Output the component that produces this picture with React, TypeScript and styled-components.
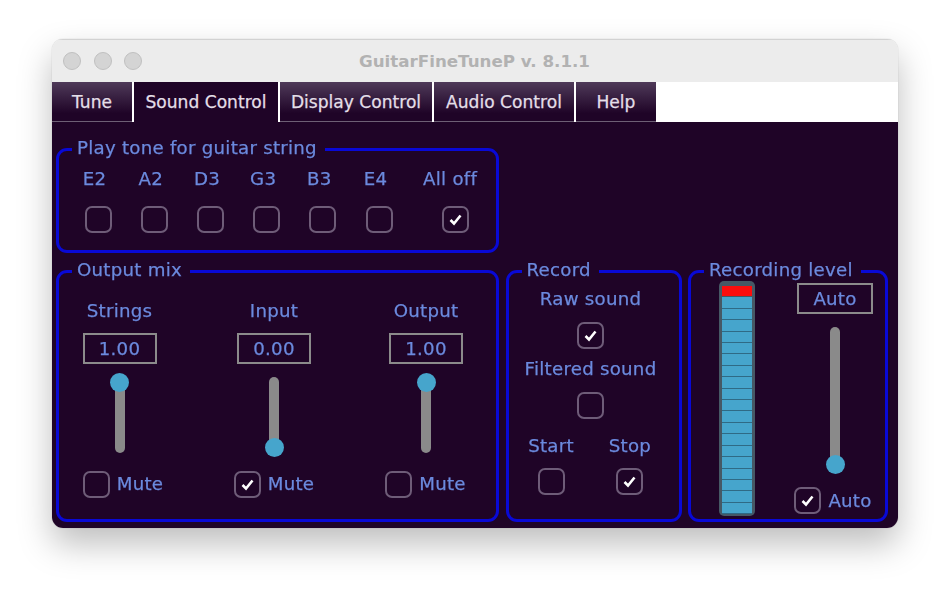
import styled, { createGlobalStyle } from "styled-components";

const Global = createGlobalStyle`
  html, body {
    margin: 0;
    background: #fff;
  }
  body {
    font-family: "DejaVu Sans", "Liberation Sans", sans-serif;
  }
`;

const Page = styled.div`
  width: 950px;
  height: 594px;
  padding: 39px 52px 0;
  box-sizing: border-box;
  overflow: hidden;
`;

const Window = styled.div`
  width: 846px;
  height: 489px;
  border-radius: 11px;
  overflow: hidden;
  display: flex;
  flex-direction: column;
  filter: blur(0.35px);
  box-shadow: 0 0 1px rgba(0, 0, 0, 0.35), 0 16px 34px rgba(0, 0, 0, 0.26);
`;

const TitleBar = styled.div`
  height: 43px;
  flex: none;
  display: flex;
  align-items: center;
  position: relative;
  padding-left: 11px;
  gap: 12.5px;
  background: #ececec;
  box-sizing: border-box;
  border-top: 1px solid #d2d2d2;
`;

const Light = styled.span`
  width: 18px;
  height: 18px;
  box-sizing: border-box;
  border-radius: 50%;
  background: #d4d4d4;
  border: 1px solid #c0c0c0;
`;

const Title = styled.div`
  position: absolute;
  left: -1px;
  right: 0;
  text-align: center;
  font-size: 16.7px;
  font-weight: bold;
  color: #b2b2b2;
`;

const TabBar = styled.div`
  height: 40px;
  flex: none;
  display: flex;
  background: #fff;
`;

const Tab = styled.div<{ $width: number; $active?: boolean }>`
  width: ${({ $width }) => $width}px;
  flex: none;
  margin-right: 2px;
  box-sizing: border-box;
  display: flex;
  align-items: center;
  justify-content: center;
  font-size: 17.1px;
  -webkit-text-stroke: 0.25px;
  color: #e4dfe8;
  background: ${({ $active }) =>
    $active ? "#1f0427" : "linear-gradient(#4f3a59, #1f0427 80%)"};
  border-bottom: ${({ $active }) => ($active ? "none" : "1px solid #6d5f75")};
`;

const Body = styled.div`
  flex: 1;
  background: #1f0427;
  box-sizing: border-box;
  padding: 26px 10px 6px 4px;
  display: grid;
  grid-template-columns: 443px 176px 200px;
  grid-template-rows: 105px 252px;
  column-gap: 6.5px;
  row-gap: 17px;
  color: #6b8ade;
  font-size: 18.2px;
  letter-spacing: 0.25px;
  -webkit-text-stroke: 0.25px;
`;

const Panel = styled.section`
  position: relative;
  box-sizing: border-box;
  border: 3px solid #0909d6;
  border-radius: 11px;
`;

const Legend = styled.div`
  position: absolute;
  left: 13px;
  top: -13.5px;
  padding: 0 8px 0 5px;
  line-height: 20px;
  background: #1f0427;
  white-space: nowrap;
`;

const ToneGrid = styled.div`
  display: grid;
  grid-template-columns: repeat(6, 56.2px) 97px;
  justify-items: center;
  align-items: center;
  padding: 16px 0 0 11px;
  row-gap: 14.5px;
`;

const Label = styled.div`
  line-height: 24px;
  white-space: nowrap;
`;

const ToneLabel = styled(Label)<{ $shift: number }>`
  margin-right: ${({ $shift }) => $shift}px;
`;

const Box = styled.span`
  width: 27px;
  height: 27px;
  flex: none;
  box-sizing: border-box;
  border: 2px solid #6e5c78;
  border-radius: 7px;
  display: flex;
  align-items: center;
  justify-content: center;
`;

const Checkbox = ({ checked }: { checked?: boolean }) => (
  <Box>
    {checked && (
      <svg width="15" height="13" viewBox="0 0 15 13">
        <path d="M2.5 7 L6 10.5 L12.5 2.5" fill="none" stroke="#fff" strokeWidth="2.6" />
      </svg>
    )}
  </Box>
);

const MixGrid = styled.div`
  display: grid;
  grid-template-columns: 121px 188px 116px;
  padding-top: 26px;
`;

const MixColumn = styled.div`
  display: flex;
  flex-direction: column;
  align-items: center;
`;

const Value = styled.div<{ $width: number; $height: number }>`
  width: ${({ $width }) => $width}px;
  height: ${({ $height }) => $height}px;
  flex: none;
  box-sizing: border-box;
  border: 2px solid #8b8b8b;
  display: flex;
  align-items: center;
  justify-content: center;
`;

const MixValue = styled.div`
  margin-top: 10px;
`;

const Track = styled.div<{ $height: number }>`
  position: relative;
  width: 10px;
  height: ${({ $height }) => $height}px;
  border-radius: 5px;
  background: #8a8a8a;
`;

const Thumb = styled.div`
  position: absolute;
  left: -4.5px;
  width: 19px;
  height: 19px;
  border-radius: 50%;
  background: #46a5cc;
`;

const Slider = ({ height, value }: { height: number; value: number }) => (
  <Track $height={height}>
    <Thumb style={{ top: -3.5 + (height - 11) * (1 - value) }} />
  </Track>
);

const MixSlider = styled.div`
  margin: 12.5px 0 18px;
`;

const CheckRow = styled.div<{ $shift?: number }>`
  display: flex;
  align-items: center;
  gap: 7px;
  margin-left: ${({ $shift }) => $shift ?? 0}px;
`;

const RecordStack = styled.div`
  display: grid;
  grid-template-columns: 79px 79px;
  justify-content: center;
  justify-items: center;
  padding: 14px 6px 0 0;
`;

const RecordWide = styled.div<{ $gap: number }>`
  grid-column: 1 / 3;
  display: flex;
  justify-content: center;
  margin-bottom: ${({ $gap }) => $gap}px;
`;

const RecordCell = styled.div`
  display: flex;
  flex-direction: column;
  align-items: center;
  gap: 10px;
`;

const LevelLayout = styled.div`
  display: flex;
  height: 100%;
  padding: 8px 10px 0 28px;
  box-sizing: border-box;
  justify-content: space-between;
`;

const Meter = styled.div`
  width: 36px;
  height: 235px;
  box-sizing: border-box;
  padding: 5px 3px 2px;
  border-radius: 5px;
  background: #465865;
  display: flex;
  flex-direction: column;
`;

const Segment = styled.div<{ $hot?: boolean }>`
  flex: 1;
  background: ${({ $hot }) => ($hot ? "#fb0d0d" : "#46a5cc")};
  border-bottom: 1.5px solid ${({ $hot }) => ($hot ? "#465865" : "#2f6a85")};
`;

const LevelSide = styled.div`
  width: 80px;
  padding-top: 2px;
  display: flex;
  flex-direction: column;
  align-items: center;
`;

const LevelSlider = styled.div`
  margin: 13px 0 15px;
`;

const Tabs = [
  { name: "Tune", width: 80 },
  { name: "Sound Control", width: 144, active: true },
  { name: "Display Control", width: 152 },
  { name: "Audio Control", width: 140 },
  { name: "Help", width: 80 },
];

const Mix = [
  { name: "Strings", value: "1.00", level: 1, muted: false, shift: 7 },
  { name: "Input", value: "0.00", level: 0, muted: true, shift: 0 },
  { name: "Output", value: "1.00", level: 1, muted: false, shift: -1 },
];

const Strings = ["E2", "A2", "D3", "G3", "B3", "E4"];

export default function App() {
  return (
    <Page>
      <Global />
      <Window>
        <TitleBar>
          <Light />
          <Light />
          <Light />
          <Title>GuitarFineTuneP v. 8.1.1</Title>
        </TitleBar>
        <TabBar>
          {Tabs.map((t) => (
            <Tab key={t.name} $width={t.width} $active={t.active}>
              {t.name}
            </Tab>
          ))}
        </TabBar>
        <Body>
          <Panel>
            <Legend>Play tone for guitar string</Legend>
            <ToneGrid>
              {Strings.map((s) => (
                <ToneLabel key={s} $shift={7}>
                  {s}
                </ToneLabel>
              ))}
              <ToneLabel $shift={11}>All off</ToneLabel>
              {Strings.map((s) => (
                <Checkbox key={s} />
              ))}
              <Checkbox checked />
            </ToneGrid>
          </Panel>
          <div />
          <div />
          <Panel>
            <Legend>Output mix</Legend>
            <MixGrid>
              {Mix.map((m) => (
                <MixColumn key={m.name}>
                  <Label>{m.name}</Label>
                  <MixValue>
                    <Value $width={74} $height={31}>
                      {m.value}
                    </Value>
                  </MixValue>
                  <MixSlider>
                    <Slider height={76} value={m.level} />
                  </MixSlider>
                  <CheckRow $shift={m.shift}>
                    <Checkbox checked={m.muted} />
                    <Label>Mute</Label>
                  </CheckRow>
                </MixColumn>
              ))}
            </MixGrid>
          </Panel>
          <Panel>
            <Legend>Record</Legend>
            <RecordStack>
              <RecordWide $gap={10.5}>
                <Label>Raw sound</Label>
              </RecordWide>
              <RecordWide $gap={8.5}>
                <Checkbox checked />
              </RecordWide>
              <RecordWide $gap={10.5}>
                <Label>Filtered sound</Label>
              </RecordWide>
              <RecordWide $gap={15}>
                <Checkbox />
              </RecordWide>
              <RecordCell>
                <Label>Start</Label>
                <Checkbox />
              </RecordCell>
              <RecordCell>
                <Label>Stop</Label>
                <Checkbox checked />
              </RecordCell>
            </RecordStack>
          </Panel>
          <Panel>
            <Legend>Recording level</Legend>
            <LevelLayout>
              <Meter>
                <Segment $hot />
                {Array.from({ length: 19 }, (_, i) => (
                  <Segment key={i} />
                ))}
              </Meter>
              <LevelSide>
                <Value $width={76} $height={31}>
                  Auto
                </Value>
                <LevelSlider>
                  <Slider height={145} value={0.015} />
                </LevelSlider>
                <CheckRow $shift={-4}>
                  <Checkbox checked />
                  <Label>Auto</Label>
                </CheckRow>
              </LevelSide>
            </LevelLayout>
          </Panel>
        </Body>
      </Window>
    </Page>
  );
}
